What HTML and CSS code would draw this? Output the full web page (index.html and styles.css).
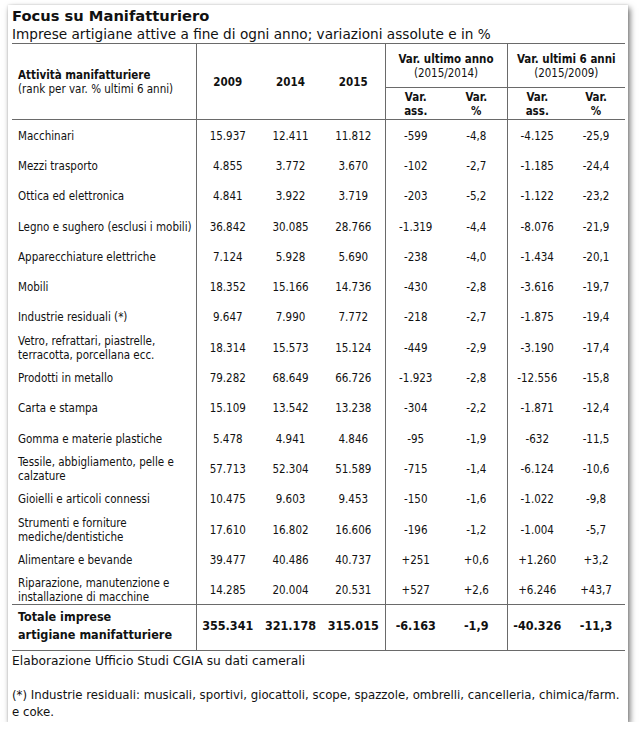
FILE: index.html
```html
<!DOCTYPE html>
<html lang="it">
<head>
<meta charset="utf-8">
<title>Focus su Manifatturiero</title>
<link rel="stylesheet" href="styles.css">
</head>
<body>
<div class="card">
  <h1 class="title">Focus su Manifatturiero</h1>
  <p class="subtitle">Imprese artigiane attive a fine di ogni anno; variazioni assolute e in %</p>
  <table class="data">
    <colgroup>
      <col class="c-name"><col class="c-y"><col class="c-y"><col class="c-y3">
      <col class="c-a"><col class="c-b"><col class="c-c"><col class="c-d">
    </colgroup>
    <thead>
      <tr class="h1">
        <th rowspan="2" class="name-h"><b>Attività manifatturiere</b><br><span class="norm">(rank per var. % ultimi 6 anni)</span></th>
        <th rowspan="2">2009</th>
        <th rowspan="2">2014</th>
        <th rowspan="2" class="sep">2015</th>
        <th colspan="2" class="grp sep">Var. ultimo anno<br><span class="norm">(2015/2014)</span></th>
        <th colspan="2" class="grp">Var. ultimi 6 anni<br><span class="norm">(2015/2009)</span></th>
      </tr>
      <tr class="h2">
        <th>Var.<br>ass.</th>
        <th class="sep">Var.<br>%</th>
        <th>Var.<br>ass.</th>
        <th>Var.<br>%</th>
      </tr>
    </thead>
    <tbody>
      <tr><td>Macchinari</td><td>15.937</td><td>12.411</td><td class="sep">11.812</td><td>-599</td><td class="sep">-4,8</td><td>-4.125</td><td>-25,9</td></tr>
      <tr><td>Mezzi trasporto</td><td>4.855</td><td>3.772</td><td class="sep">3.670</td><td>-102</td><td class="sep">-2,7</td><td>-1.185</td><td>-24,4</td></tr>
      <tr><td>Ottica ed elettronica</td><td>4.841</td><td>3.922</td><td class="sep">3.719</td><td>-203</td><td class="sep">-5,2</td><td>-1.122</td><td>-23,2</td></tr>
      <tr><td>Legno e sughero (esclusi i mobili)</td><td>36.842</td><td>30.085</td><td class="sep">28.766</td><td>-1.319</td><td class="sep">-4,4</td><td>-8.076</td><td>-21,9</td></tr>
      <tr><td>Apparecchiature elettriche</td><td>7.124</td><td>5.928</td><td class="sep">5.690</td><td>-238</td><td class="sep">-4,0</td><td>-1.434</td><td>-20,1</td></tr>
      <tr><td>Mobili</td><td>18.352</td><td>15.166</td><td class="sep">14.736</td><td>-430</td><td class="sep">-2,8</td><td>-3.616</td><td>-19,7</td></tr>
      <tr><td>Industrie residuali (*)</td><td>9.647</td><td>7.990</td><td class="sep">7.772</td><td>-218</td><td class="sep">-2,7</td><td>-1.875</td><td>-19,4</td></tr>
      <tr><td>Vetro, refrattari, piastrelle,<br>terracotta, porcellana ecc.</td><td>18.314</td><td>15.573</td><td class="sep">15.124</td><td>-449</td><td class="sep">-2,9</td><td>-3.190</td><td>-17,4</td></tr>
      <tr><td>Prodotti in metallo</td><td>79.282</td><td>68.649</td><td class="sep">66.726</td><td>-1.923</td><td class="sep">-2,8</td><td>-12.556</td><td>-15,8</td></tr>
      <tr><td>Carta e stampa</td><td>15.109</td><td>13.542</td><td class="sep">13.238</td><td>-304</td><td class="sep">-2,2</td><td>-1.871</td><td>-12,4</td></tr>
      <tr><td>Gomma e materie plastiche</td><td>5.478</td><td>4.941</td><td class="sep">4.846</td><td>-95</td><td class="sep">-1,9</td><td>-632</td><td>-11,5</td></tr>
      <tr><td>Tessile, abbigliamento, pelle e<br>calzature</td><td>57.713</td><td>52.304</td><td class="sep">51.589</td><td>-715</td><td class="sep">-1,4</td><td>-6.124</td><td>-10,6</td></tr>
      <tr><td>Gioielli e articoli connessi</td><td>10.475</td><td>9.603</td><td class="sep">9.453</td><td>-150</td><td class="sep">-1,6</td><td>-1.022</td><td>-9,8</td></tr>
      <tr><td>Strumenti e forniture<br>mediche/dentistiche</td><td>17.610</td><td>16.802</td><td class="sep">16.606</td><td>-196</td><td class="sep">-1,2</td><td>-1.004</td><td>-5,7</td></tr>
      <tr><td>Alimentare e bevande</td><td>39.477</td><td>40.486</td><td class="sep">40.737</td><td>+251</td><td class="sep">+0,6</td><td>+1.260</td><td>+3,2</td></tr>
      <tr><td>Riparazione, manutenzione e<br>installazione di macchine</td><td>14.285</td><td>20.004</td><td class="sep">20.531</td><td>+527</td><td class="sep">+2,6</td><td>+6.246</td><td>+43,7</td></tr>
    </tbody>
    <tfoot>
      <tr><td>Totale imprese<br>artigiane manifatturiere</td><td>355.341</td><td>321.178</td><td class="sep">315.015</td><td>-6.163</td><td class="sep">-1,9</td><td>-40.326</td><td>-11,3</td></tr>
    </tfoot>
  </table>
  <p class="source">Elaborazione Ufficio Studi CGIA su dati camerali</p>
  <p class="note">(*) Industrie residuali: musicali, sportivi, giocattoli, scope, spazzole, ombrelli, cancelleria, chimica/farm. e coke.</p>
</div>
</body>
</html>
```

FILE: styles.css
```css
html, body {
  margin: 0;
  padding: 0;
  background: #ffffff;
}

body {
  padding: 5px 0 0 8px;
  color: #111;
  font-family: "DejaVu Sans", Verdana, sans-serif;
}

.card {
  width: 620px;
  height: 717px;
  box-sizing: border-box;
  padding: 2px 3px 0 4px;
  background: #fff;
  box-shadow: 2px 3px 6px rgba(0, 0, 0, 0.55), 0 0 2px rgba(0, 0, 0, 0.15);
}

.title {
  margin: 0;
  font-size: 14.7px;
  line-height: 18px;
  font-weight: bold;
}

.subtitle {
  margin: 0;
  font-size: 13.65px;
  line-height: 18px;
}

.data {
  width: 613px;
  border-collapse: collapse;
  table-layout: fixed;
  font-family: "DejaVu Sans Condensed", "DejaVu Sans", sans-serif;
  font-size: 11.5px;
  border-top: 1px solid #6a6a6a;
  border-bottom: 1px solid #6a6a6a;
}

.c-name { width: 184px; }
.c-y { width: 63px; }
.c-y3 { width: 63px; }
.c-a { width: 61px; }
.c-b { width: 61px; }
.c-c { width: 60px; }
.c-d { width: 58px; }

.data th,
.data td {
  padding: 0;
  text-align: center;
  vertical-align: middle;
  line-height: 14px;
}

.data th {
  font-weight: bold;
}

.data .norm {
  font-weight: normal;
}

.data th.name-h,
.data td:first-child {
  text-align: left;
  padding-left: 6px;
  border-right: 1px solid #6a6a6a;
}

.data .sep {
  border-right: 1px solid #6a6a6a;
}

.h1 { height: 44px; }
.h2 { height: 32px; }

.h1 .grp {
  border-bottom: 1px solid #6a6a6a;
}

.h2 th {
  border-bottom: 1px solid #6a6a6a;
}

.h1 .name-h,
.h1 th[rowspan] {
  border-bottom: 1px solid #6a6a6a;
}

.data tbody tr {
  height: 30.3px;
}

.data tbody td {
  padding-top: 2px;
}

.data tfoot tr {
  height: 46px;
}

.data tfoot td {
  font-weight: bold;
  font-size: 12.5px;
  line-height: 18px;
  padding-bottom: 3px;
  border-top: 1px solid #6a6a6a;
}

.source {
  margin: 2px 0 0 0;
  font-size: 12.25px;
  line-height: 17px;
}

.note {
  margin: 17px 0 0 0;
  font-size: 11.74px;
  line-height: 17px;
}
```
